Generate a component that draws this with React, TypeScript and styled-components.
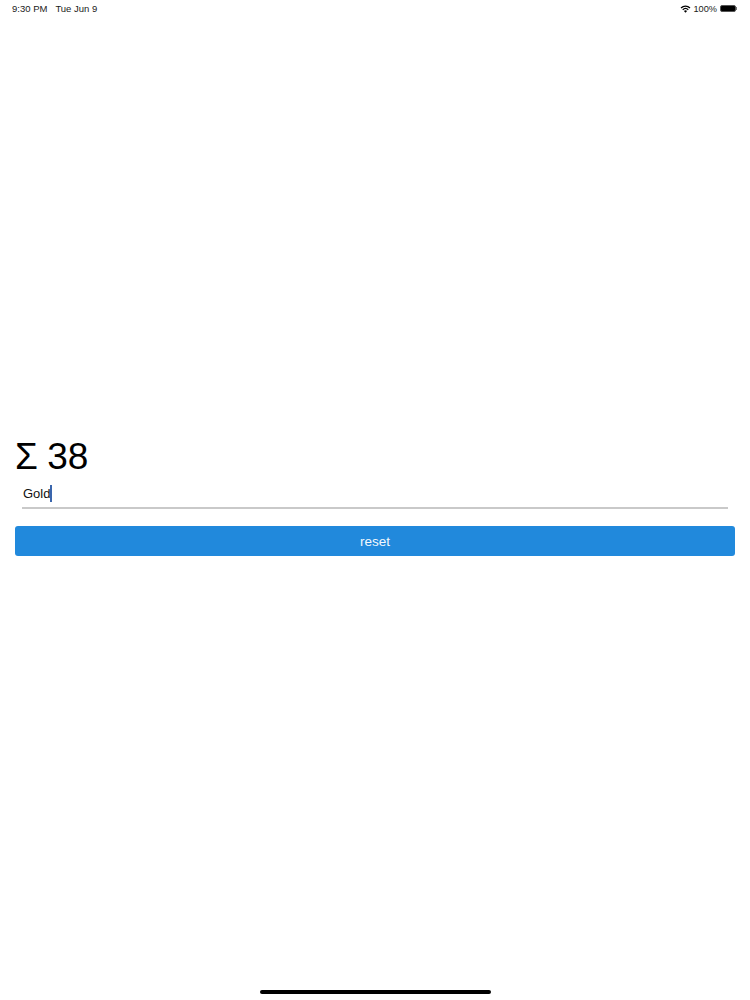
import styled, { createGlobalStyle } from 'styled-components';

const GlobalStyle = createGlobalStyle`
  html, body {
    margin: 0;
    padding: 0;
    background: #ffffff;
  }
  body {
    font-family: "Liberation Sans", Arial, sans-serif;
    color: #000000;
  }
`;

export default function App() {
  return (
    <Page>
      <GlobalStyle />
      <StatusBar>
        <StatusGroup>
          <span>9:30 PM</span>
          <span>Tue Jun 9</span>
        </StatusGroup>
        <StatusRight>
          <WifiIcon viewBox="0 0 16 12">
            <path d="M8 11.6 5.7 9.1a3.3 3.3 0 0 1 4.6 0L8 11.6Z" />
            <path d="M4.5 7.8 3.2 6.4a7 7 0 0 1 9.6 0l-1.3 1.4a5.1 5.1 0 0 0-7 0Z" />
            <path d="M2 5.1.6 3.6a10.8 10.8 0 0 1 14.8 0L14 5.1a8.8 8.8 0 0 0-12 0Z" />
          </WifiIcon>
          <span>100%</span>
          <Battery />
          <BatteryCap />
        </StatusRight>
      </StatusBar>

      <Main>
        <Total>Σ 38</Total>
        <NameField>
          <NameValue>Gold</NameValue>
          <Caret />
        </NameField>
        <ResetButton type="button">reset</ResetButton>
      </Main>

      <HomeIndicator />
    </Page>
  );
}

const Page = styled.div`
  display: flex;
  flex-direction: column;
  height: 1000px;
  overflow: hidden;
`;

const StatusBar = styled.div`
  display: flex;
  justify-content: space-between;
  align-items: center;
  height: 17px;
  padding: 0 12px;
  font-size: 9.5px;
  color: #1a1a1a;
`;

const StatusGroup = styled.div`
  display: flex;
  gap: 8px;
`;

const StatusRight = styled.div`
  display: flex;
  align-items: center;
  gap: 3px;
  padding-right: 1px;
  font-size: 9.2px;
`;

const WifiIcon = styled.svg`
  width: 11px;
  height: 8px;
  fill: #000000;
`;

const Battery = styled.div`
  box-sizing: border-box;
  width: 16px;
  height: 7px;
  border: 1px solid #555555;
  border-radius: 2px;
  background: #000000;
`;

const BatteryCap = styled.div`
  width: 1px;
  height: 3px;
  margin-left: -3px;
  background: #777777;
`;

const Main = styled.main`
  flex: 1;
  display: flex;
  flex-direction: column;
  padding: 419px 15px 0;
`;

const Total = styled.div`
  font-size: 37px;
  line-height: 42px;
  word-spacing: -1px;
  color: #000000;
`;

const NameField = styled.div`
  display: flex;
  align-items: center;
  box-sizing: border-box;
  height: 28px;
  margin: 3px 7px 0;
  padding: 0 1px 2px;
  border-bottom: 2px solid #c9c9c9;
`;

const NameValue = styled.span`
  font-size: 13px;
  color: #111111;
`;

const Caret = styled.span`
  width: 2px;
  height: 17px;
  background: #3a66ad;
`;

const ResetButton = styled.button`
  height: 30px;
  margin-top: 17px;
  padding: 0;
  border: none;
  border-radius: 3px;
  background: #2189dc;
  color: #f2f8fd;
  font-family: inherit;
  font-size: 13.5px;
`;

const HomeIndicator = styled.div`
  align-self: center;
  width: 231px;
  height: 4px;
  margin-bottom: 6px;
  border-radius: 2px;
  background: #000000;
`;
